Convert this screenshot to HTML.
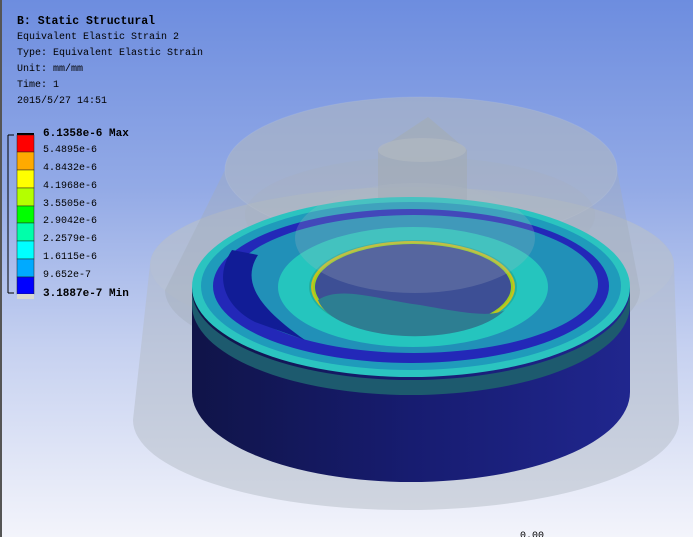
<!DOCTYPE html>
<html><head><meta charset="utf-8"><style>
html,body{margin:0;padding:0;width:693px;height:537px;overflow:hidden;}
body{position:relative;background:linear-gradient(#6d8ddf 0%,#93aae6 35%,#c6d1f0 65%,#f3f4fb 100%);font-family:"Liberation Mono","Noto Sans CJK SC",monospace;}
.t{position:absolute;left:17px;font-size:10px;color:#000;white-space:pre;line-height:12px;}
.l{position:absolute;left:43px;font-size:10px;color:#000;white-space:pre;line-height:12px;}
</style></head><body>
<svg width="693" height="537" style="position:absolute;left:0;top:0">
<defs><linearGradient id="sd" x1="0" x2="1" y1="0" y2="0"><stop offset="0" stop-color="#101448"/><stop offset="0.5" stop-color="#171c70"/><stop offset="1" stop-color="#20268e"/></linearGradient></defs>
<path d="M150,265 A262,78 0 0 1 674,265 L679,420 A273,90 0 0 1 133,420 Z" fill="#b4bcc6" opacity="0.5"/>
<ellipse cx="412" cy="265" rx="262" ry="78" fill="#c0c8d0" opacity="0.25"/>
<path d="M225,170 A196,73 0 0 1 617,170 L640,290 A230,75 0 0 1 165,290 Z" fill="#a3acb8" opacity="0.4"/>
<ellipse cx="421" cy="170" rx="196" ry="73" fill="#b8c0ca" opacity="0.35" stroke="#d2d8dd" stroke-opacity="0.5"/>
<ellipse cx="420" cy="215" rx="175" ry="58" fill="#a8b0ba" opacity="0.25"/>
<path d="M378,150 L428,117 L467,150 L467,200 A45,14 0 0 1 378,200 Z" fill="#a3adb6" opacity="0.7"/>
<ellipse cx="422" cy="150" rx="44" ry="12" fill="#b0b8c0" opacity="0.7"/>
<path d="M192,287 L192,392 A219,90 0 0 0 630,392 L630,287 Z" fill="url(#sd)"/>
<path d="M192,290 A219,90 0 0 0 630,290 L630,305 A219,90 0 0 1 192,305 Z" fill="#1d5a6e"/>
<ellipse cx="411" cy="287" rx="219" ry="90" fill="#2bc4c0"/>
<ellipse cx="411" cy="286" rx="210" ry="84" fill="#1f9bbb"/>
<ellipse cx="411" cy="286" rx="198" ry="77" fill="#2328b8"/>
<ellipse cx="414" cy="284" rx="184" ry="69" fill="#2190b8"/>
<path d="M232,250 C215,275 222,305 255,322 L305,340 C255,305 242,280 258,255 Z" fill="#111c96"/>
<ellipse cx="413" cy="287" rx="135" ry="60" fill="#25c5be"/>
<ellipse cx="413" cy="287" rx="104" ry="47" fill="#22b0a0"/>
<ellipse cx="413" cy="287" rx="101" ry="45" fill="#9ad020" stroke="#c8c020" stroke-width="2"/>
<ellipse cx="413" cy="287" rx="98" ry="43" fill="#3d4f95"/>
<path d="M318,300 C340,285 380,300 420,305 C460,312 490,318 505,310 A98,43 0 0 1 318,300 Z" fill="#2d7e92"/>
<ellipse cx="415" cy="238" rx="120" ry="55" fill="#b0bcc6" opacity="0.22"/>
<line x1="1" y1="0" x2="1" y2="537" stroke="#555" stroke-width="2"/>
<line x1="8" y1="135" x2="8" y2="293" stroke="#000"/>
<line x1="8" y1="135" x2="14" y2="135" stroke="#000"/>
<line x1="8" y1="293" x2="14" y2="293" stroke="#000"/>
<rect x="17" y="133" width="17" height="2" fill="#000"/>
<rect x="17" y="135" width="17" height="17" fill="#ff0000" stroke="#222" stroke-width="0.5"/>
<rect x="17" y="152" width="17" height="18" fill="#ffaa00" stroke="#222" stroke-width="0.5"/>
<rect x="17" y="170" width="17" height="18" fill="#ffff00" stroke="#222" stroke-width="0.5"/>
<rect x="17" y="188" width="17" height="18" fill="#b4ff00" stroke="#222" stroke-width="0.5"/>
<rect x="17" y="206" width="17" height="17" fill="#00ff00" stroke="#222" stroke-width="0.5"/>
<rect x="17" y="223" width="17" height="18" fill="#00ffaa" stroke="#222" stroke-width="0.5"/>
<rect x="17" y="241" width="17" height="18" fill="#00ffff" stroke="#222" stroke-width="0.5"/>
<rect x="17" y="259" width="17" height="18" fill="#00aaff" stroke="#222" stroke-width="0.5"/>
<rect x="17" y="277" width="17" height="17" fill="#0000ff" stroke="#222" stroke-width="0.5"/>
<rect x="17" y="294" width="17" height="5" fill="#d8d8d0"/>
</svg>
<div class="t" style="top:16px;font-weight:bold;font-size:11.5px">B: Static Structural</div>
<div class="t" style="top:32px">Equivalent Elastic Strain 2</div>
<div class="t" style="top:48px">Type: Equivalent Elastic Strain</div>
<div class="t" style="top:64px">Unit: mm/mm</div>
<div class="t" style="top:80px">Time: 1</div>
<div class="t" style="top:96px">2015/5/27 14:51</div>
<div class="l" style="top:128px;font-weight:bold;font-size:11px">6.1358e-6 Max</div>
<div class="l" style="top:145px">5.4895e-6</div>
<div class="l" style="top:163px">4.8432e-6</div>
<div class="l" style="top:181px">4.1968e-6</div>
<div class="l" style="top:199px">3.5505e-6</div>
<div class="l" style="top:216px">2.9042e-6</div>
<div class="l" style="top:234px">2.2579e-6</div>
<div class="l" style="top:252px">1.6115e-6</div>
<div class="l" style="top:270px">9.652e-7</div>
<div class="l" style="top:288px;font-weight:bold;font-size:11px">3.1887e-7 Min</div>
<div class="t" style="left:520px;top:531px">0.00</div>
</body></html>
